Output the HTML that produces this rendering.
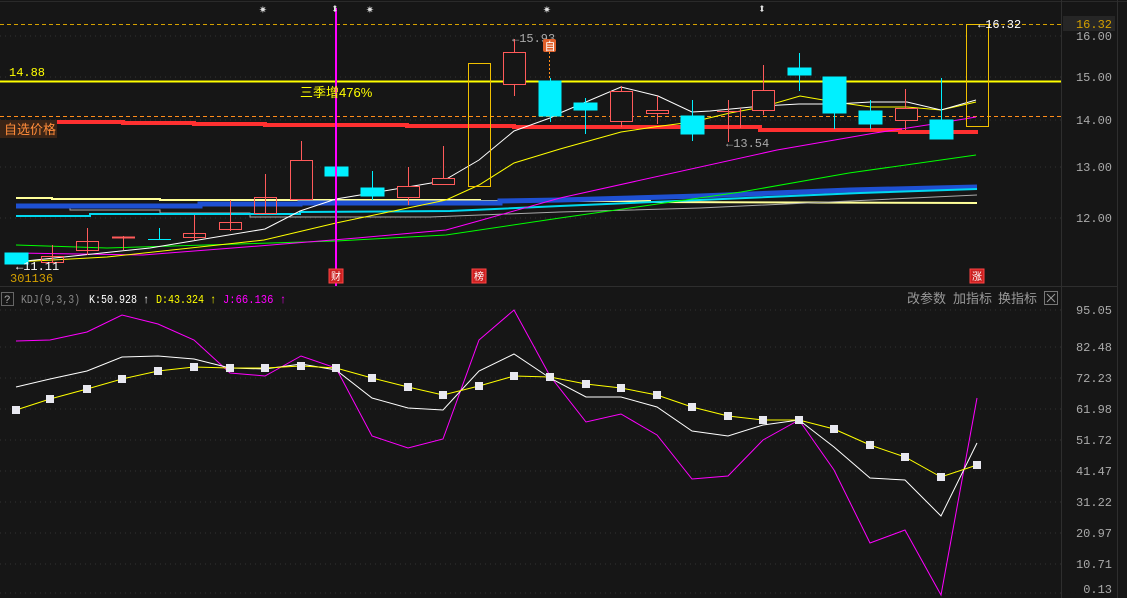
<!DOCTYPE html>
<html><head><meta charset="utf-8"><style>
html,body{margin:0;padding:0;background:#161616;width:1127px;height:598px;overflow:hidden}
svg{display:block}
text{font-family:"Liberation Mono","Noto Sans CJK SC",monospace}
text.cn{font-family:"Liberation Sans","Noto Sans CJK SC",sans-serif}
</style></head><body>
<svg width="1127" height="598" viewBox="0 0 1127 598" font-size="12" xmlns="http://www.w3.org/2000/svg">
<rect width="1127" height="598" fill="#161616"/>
<line x1="0" y1="1.5" x2="1127" y2="1.5" stroke="#2a2a2a"/>
<line x1="1061.5" y1="0" x2="1061.5" y2="598" stroke="#2e2e2e"/>
<line x1="1117.5" y1="0" x2="1117.5" y2="598" stroke="#2e2e2e"/>
<line x1="0" y1="286.5" x2="1117" y2="286.5" stroke="#2e2e2e"/>
<g stroke="#333" stroke-dasharray="1,4">
<line x1="0" y1="36" x2="1061" y2="36"/><line x1="0" y1="77" x2="1061" y2="77"/><line x1="0" y1="120" x2="1061" y2="120"/><line x1="0" y1="167" x2="1061" y2="167"/><line x1="0" y1="218" x2="1061" y2="218"/>
<line x1="0" y1="310" x2="1061" y2="310"/><line x1="0" y1="347" x2="1061" y2="347"/><line x1="0" y1="378" x2="1061" y2="378"/><line x1="0" y1="409" x2="1061" y2="409"/><line x1="0" y1="440" x2="1061" y2="440"/><line x1="0" y1="471" x2="1061" y2="471"/><line x1="0" y1="502" x2="1061" y2="502"/><line x1="0" y1="533" x2="1061" y2="533"/><line x1="0" y1="564" x2="1061" y2="564"/><line x1="0" y1="593" x2="1061" y2="593"/>
</g>
<line x1="0" y1="24.5" x2="1061" y2="24.5" stroke="#d4a000" stroke-dasharray="4,3"/>
<line x1="0" y1="116.5" x2="1061" y2="116.5" stroke="#ff8c1a" stroke-dasharray="4,3"/>
<line x1="0" y1="81.5" x2="1061" y2="81.5" stroke="#ffff00" stroke-width="2"/>
<polyline fill="none" stroke="#ff3030" stroke-width="4" points="15,122 123,122 123,123 194,123 194,124 265,124 265,125 407,125 407,126 514,126 514,127 760,127 760,130 900,130 900,132 978,132"/>
<polyline fill="none" stroke="#ffff99" stroke-width="2" points="16,198 52,198 52,199 160,199 160,200 480,200 480,201 650,201 650,202 977,203"/>
<polyline fill="none" stroke="#aaaaaa" stroke-width="1" points="16,208 70,208 70,210 160,210 160,213 250,213 250,217 430,217 480,215 560,212 700,208 850,201 977,195"/>
<polyline fill="none" stroke="#1e50d2" stroke-width="5" points="16,206 200,206 200,204 300,204 300,203 500,203 500,201 560,200 700,196 850,190 977,187"/>
<polyline fill="none" stroke="#00d8f0" stroke-width="2" points="16,216 90,216 90,214 300,214 300,212 450,211 560,206 700,200 860,193 977,189"/>
<polyline fill="none" stroke="#00ff00" stroke-width="1" points="16,245 107,248 336,241 446,235 560,218 741,192 849,173 976,155"/>
<polyline fill="none" stroke="#ff00ff" stroke-width="1" points="16,253 143,255 271,245 357,238 446,230 482,220 560,198 777,150 875,133 940,123 976,117"/>
<polyline fill="none" stroke="#ffff00" stroke-width="1" points="16,262 107,257 264,240 336,223 446,200 479,185 514,163 560,149 621,132 654,127 692,122 730,113 762,107 800,96 835,102 871,107 907,107 941,110 976,102"/>
<polyline fill="none" stroke="#ffffff" stroke-width="1" points="16,262 150,248 265,229 300,211 336,199 372,193 443,181 479,160 514,131 550,118 560,113 621,87 658,96 692,112 710,111 762,106 799,104 835,104 871,102 907,102 941,110 976,100"/>
<g stroke="#ff5a5a" fill="none">
<line x1="52.5" y1="245" x2="52.5" y2="263"/><rect x="41.5" y="256.5" width="22" height="6"/>
<line x1="87.5" y1="228" x2="87.5" y2="255"/><rect x="76.5" y="241.5" width="22" height="9"/>
<line x1="123.5" y1="236" x2="123.5" y2="250"/><line x1="112" y1="237.5" x2="135" y2="237.5" stroke-width="2"/>
<line x1="194.5" y1="215" x2="194.5" y2="240"/><rect x="183.5" y="233.5" width="22" height="4"/>
<line x1="230.5" y1="200" x2="230.5" y2="231"/><rect x="219.5" y="222.5" width="22" height="7"/>
<line x1="265.5" y1="174" x2="265.5" y2="213"/><rect x="254.5" y="197.5" width="22" height="16"/>
<line x1="301.5" y1="141" x2="301.5" y2="199"/><rect x="290.5" y="160.5" width="22" height="39" fill="#161616"/>
<line x1="408.5" y1="167" x2="408.5" y2="205"/><rect x="397.5" y="186.5" width="22" height="11" fill="#161616"/>
<line x1="443.5" y1="146" x2="443.5" y2="184"/><rect x="432.5" y="178.5" width="22" height="6" fill="#161616"/>
<line x1="514.5" y1="39" x2="514.5" y2="96"/><rect x="503.5" y="52.5" width="22" height="32" fill="#161616"/>
<line x1="621.5" y1="86" x2="621.5" y2="127"/><rect x="610.5" y="91.5" width="22" height="30" fill="#161616"/>
<line x1="657.5" y1="96" x2="657.5" y2="124"/><rect x="646.5" y="110.5" width="22" height="3" fill="#161616"/>
<line x1="728.5" y1="100" x2="728.5" y2="142"/><line x1="740.5" y1="108" x2="740.5" y2="128"/><line x1="717" y1="111.5" x2="740" y2="111.5"/>
<line x1="763.5" y1="65" x2="763.5" y2="115"/><rect x="752.5" y="90.5" width="22" height="20" fill="#161616"/>
<line x1="905.5" y1="89" x2="905.5" y2="130"/><rect x="895.5" y="108.5" width="22" height="12" fill="#161616"/>
</g>
<g stroke="#00f0ff" fill="#00f0ff">
<rect x="5" y="253" width="23" height="11"/>
<line x1="159.5" y1="228" x2="159.5" y2="239"/><line x1="148" y1="239.5" x2="171" y2="239.5"/>
<rect x="325" y="167" width="23" height="9"/>
<line x1="372.5" y1="171" x2="372.5" y2="200"/><rect x="361" y="188" width="23" height="8"/>
<line x1="550.5" y1="78" x2="550.5" y2="122"/><rect x="539" y="81" width="22" height="35"/>
<line x1="585.5" y1="98" x2="585.5" y2="134"/><rect x="574" y="103" width="23" height="7"/>
<line x1="692.5" y1="100" x2="692.5" y2="141"/><rect x="681" y="116" width="23" height="18"/>
<line x1="799.5" y1="53" x2="799.5" y2="91"/><rect x="788" y="68" width="23" height="7"/>
<line x1="834.5" y1="77" x2="834.5" y2="129"/><rect x="823" y="77" width="23" height="36"/>
<line x1="870.5" y1="100" x2="870.5" y2="129"/><rect x="859" y="111" width="23" height="13"/>
<line x1="941.5" y1="78" x2="941.5" y2="139"/><rect x="930" y="120" width="23" height="19"/>
</g>
<g stroke="#f0c000" fill="none">
<rect x="468.5" y="63.5" width="22" height="123"/>
<rect x="966.5" y="24.5" width="22" height="102"/>
</g>
<line x1="336" y1="8" x2="336" y2="286" stroke="#ff00ff" stroke-width="2"/>
<g fill="#e0e0e0" font-size="13">
<text x="259" y="13">✷</text><text x="366" y="13">✷</text><text x="543" y="13">✷</text>
<text x="331" y="13">⬍</text><text x="758" y="13">⬍</text>
</g>
<text x="9" y="76" fill="#ffff00" font-size="12">14.88</text>
<text x="300" y="97" fill="#ffff00" class="cn" font-size="13">三季增476%</text>
<text x="512" y="42" fill="#aaaaaa" font-size="12">←15.93</text>
<rect x="543" y="39" width="13" height="13" rx="2" fill="#e0602a"/>
<text x="544.5" y="50" fill="#fff" class="cn" font-size="11">自</text>
<line x1="549.5" y1="52" x2="549.5" y2="80" stroke="#ff8c1a" stroke-dasharray="2,2"/>
<text x="726" y="147" fill="#aaaaaa" font-size="12">←13.54</text>
<text x="978" y="28" fill="#ffffff" font-size="12">←16.32</text>
<text x="16" y="270" fill="#ffffff" font-size="12">←11.11</text>
<text x="10" y="282" fill="#d4a000" font-size="12">301136</text>
<rect x="0" y="120" width="57" height="18" fill="#3a2416"/>
<text x="4" y="134" fill="#ff8c3a" class="cn" font-size="13">自选价格</text>
<g font-size="10" fill="#fff">
<rect x="329" y="269" width="14" height="14" fill="#cc2222" stroke="#ff4444"/><text class="cn" x="331" y="280">财</text>
<rect x="472" y="269" width="14" height="14" fill="#cc2222" stroke="#ff4444"/><text class="cn" x="474" y="280">榜</text>
<rect x="970" y="269" width="14" height="14" fill="#cc2222" stroke="#ff4444"/><text class="cn" x="972" y="280">涨</text>
</g>
<rect x="1063" y="16" width="52" height="15" fill="#262626"/>
<g fill="#aaaaaa" font-size="12" text-anchor="end">
<text x="1112" y="28" fill="#d4a000">16.32</text>
<text x="1112" y="40">16.00</text><text x="1112" y="81">15.00</text><text x="1112" y="124">14.00</text><text x="1112" y="171">13.00</text><text x="1112" y="222">12.00</text>
<text x="1112" y="314">95.05</text><text x="1112" y="351">82.48</text><text x="1112" y="382">72.23</text><text x="1112" y="413">61.98</text><text x="1112" y="444">51.72</text><text x="1112" y="475">41.47</text><text x="1112" y="506">31.22</text><text x="1112" y="537">20.97</text><text x="1112" y="568">10.71</text><text x="1112" y="593">0.13</text>
</g>
<rect x="1.5" y="292.5" width="12" height="13" fill="none" stroke="#666"/>
<text x="4" y="303" fill="#aaa" font-size="11">?</text>
<text x="21" y="303" fill="#888" font-size="12" textLength="59" lengthAdjust="spacingAndGlyphs">KDJ(9,3,3)</text>
<text x="89" y="303" fill="#fff" font-size="12" textLength="60" lengthAdjust="spacingAndGlyphs">K:50.928 ↑</text>
<text x="156" y="303" fill="#ffff00" font-size="12" textLength="60" lengthAdjust="spacingAndGlyphs">D:43.324 ↑</text>
<text x="223" y="303" fill="#ff00ff" font-size="12" textLength="63" lengthAdjust="spacingAndGlyphs">J:66.136 ↑</text>
<text x="907" y="303" fill="#999" class="cn" font-size="13">改参数</text>
<text x="953" y="303" fill="#999" class="cn" font-size="13">加指标</text>
<text x="998" y="303" fill="#999" class="cn" font-size="13">换指标</text>
<rect x="1044.5" y="291.5" width="13" height="13" fill="none" stroke="#777"/>
<path d="M1047 294 L1055 302 M1055 294 L1047 302" stroke="#999"/>
<polyline fill="none" stroke="#ff00ff" points="16,341 50,340 87,332 122,315 158,324 194,340 230,373 265,376 301,356 336,368 372,436 408,448 443,439 479,340 514,310 550,376 586,422 621,414 657,435 692,479 728,476 763,440 799,420 834,470 870,543 905,530 941,595 977,398"/>
<polyline fill="none" stroke="#ffffff" points="16,387 50,379 87,371 122,357 158,356 194,359 230,368 265,369 301,364 336,370 372,398 408,408 443,410 479,371 514,354 550,378 586,397 621,397 657,407 692,431 728,436 763,425 799,420 834,447 870,478 905,480 941,516 977,443"/>
<polyline fill="none" stroke="#ffff00" points="16,410 50,399 87,389 122,379 158,371 194,367 230,368 265,368 301,366 336,368 372,378 408,387 443,395 479,386 514,376 550,377 586,384 621,388 657,395 692,407 728,416 763,420 799,420 834,429 870,445 905,457 941,477 977,465"/>
<g fill="#e8e8f0">
<rect x="12" y="406" width="8" height="8"/><rect x="46" y="395" width="8" height="8"/><rect x="83" y="385" width="8" height="8"/><rect x="118" y="375" width="8" height="8"/><rect x="154" y="367" width="8" height="8"/><rect x="190" y="363" width="8" height="8"/><rect x="226" y="364" width="8" height="8"/><rect x="261" y="364" width="8" height="8"/><rect x="297" y="362" width="8" height="8"/><rect x="332" y="364" width="8" height="8"/><rect x="368" y="374" width="8" height="8"/><rect x="404" y="383" width="8" height="8"/><rect x="439" y="391" width="8" height="8"/><rect x="475" y="382" width="8" height="8"/><rect x="510" y="372" width="8" height="8"/><rect x="546" y="373" width="8" height="8"/><rect x="582" y="380" width="8" height="8"/><rect x="617" y="384" width="8" height="8"/><rect x="653" y="391" width="8" height="8"/><rect x="688" y="403" width="8" height="8"/><rect x="724" y="412" width="8" height="8"/><rect x="759" y="416" width="8" height="8"/><rect x="795" y="416" width="8" height="8"/><rect x="830" y="425" width="8" height="8"/><rect x="866" y="441" width="8" height="8"/><rect x="901" y="453" width="8" height="8"/><rect x="937" y="473" width="8" height="8"/><rect x="973" y="461" width="8" height="8"/>
</g>
</svg>
</body></html>
